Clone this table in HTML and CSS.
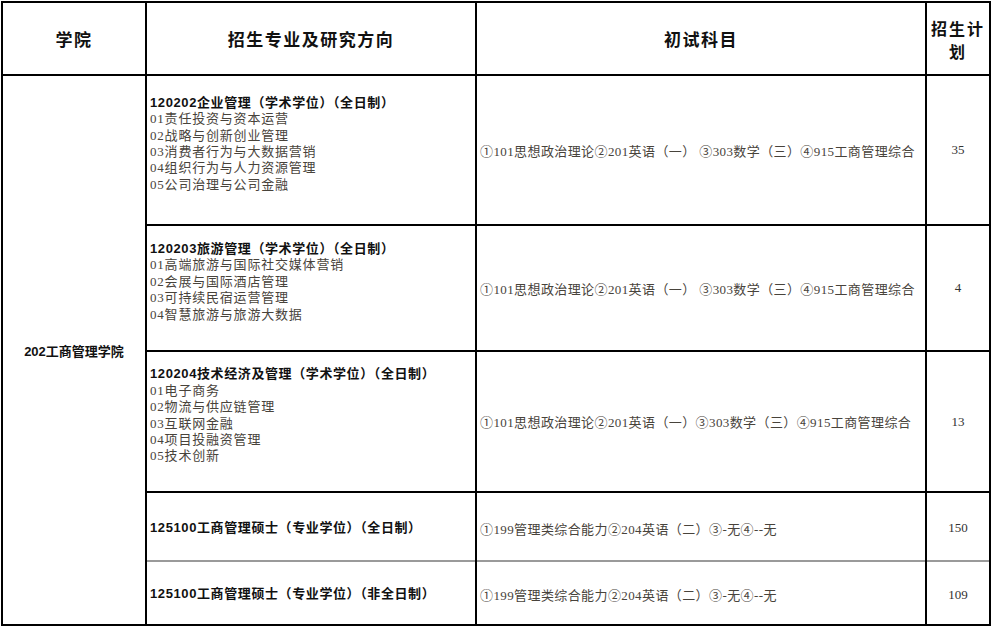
FILE: index.html
```html
<!DOCTYPE html>
<html lang="zh-CN">
<head>
<meta charset="utf-8">
<title>招生专业目录</title>
<link rel="stylesheet" href="styles.css">
</head>
<body>
<div class="sheet">
  <div class="cell head">学院</div>
  <div class="cell head">招生专业及研究方向</div>
  <div class="cell head">初试科目</div>
  <div class="cell head plan"><span>招生计</span><span>划</span></div>

  <div class="cell college">202工商管理学院</div>

  <div class="cell major padded">
    <div class="title">120202企业管理（学术学位）（全日制）</div>
    <div class="dir">01责任投资与资本运营</div>
    <div class="dir">02战略与创新创业管理</div>
    <div class="dir">03消费者行为与大数据营销</div>
    <div class="dir">04组织行为与人力资源管理</div>
    <div class="dir">05公司治理与公司金融</div>
  </div>
  <div class="cell exam">①101思想政治理论②201英语（一） ③303数学（三）④915工商管理综合</div>
  <div class="cell num">35</div>

  <div class="cell major padded">
    <div class="title">120203旅游管理（学术学位）（全日制）</div>
    <div class="dir">01高端旅游与国际社交媒体营销</div>
    <div class="dir">02会展与国际酒店管理</div>
    <div class="dir">03可持续民宿运营管理</div>
    <div class="dir">04智慧旅游与旅游大数据</div>
  </div>
  <div class="cell exam">①101思想政治理论②201英语（一） ③303数学（三）④915工商管理综合</div>
  <div class="cell num">4</div>

  <div class="cell major padded">
    <div class="title">120204技术经济及管理（学术学位）（全日制）</div>
    <div class="dir">01电子商务</div>
    <div class="dir">02物流与供应链管理</div>
    <div class="dir">03互联网金融</div>
    <div class="dir">04项目投融资管理</div>
    <div class="dir">05技术创新</div>
  </div>
  <div class="cell exam">①101思想政治理论②201英语（一）③303数学（三）④915工商管理综合</div>
  <div class="cell num">13</div>

  <div class="cell major low">
    <div class="title">125100工商管理硕士（专业学位）（全日制）</div>
  </div>
  <div class="cell exam low">①199管理类综合能力②204英语（二）③-无④--无</div>
  <div class="cell num low">150</div>

  <div class="cell major low last">
    <div class="title">125100工商管理硕士（专业学位）（非全日制）</div>
  </div>
  <div class="cell exam low last">①199管理类综合能力②204英语（二）③-无④--无</div>
  <div class="cell num low last">109</div>
</div>
</body>
</html>
```

FILE: styles.css
```css
html, body {
  margin: 0;
  padding: 0;
  background: #fff;
}

.sheet {
  margin: 1px 0 0 1px;
  width: 986px;
  padding: 2px;
  background: #000;
  display: grid;
  grid-template-columns: 142px 328px 448px 62px;
  grid-template-rows: 71px 148px 124px 139px 67px 62px;
  gap: 2px;
}

.cell {
  background: #fff;
  display: flex;
  align-items: center;
  box-sizing: border-box;
}

.head {
  justify-content: center;
  text-align: center;
  font-family: "Noto Sans CJK SC", "Liberation Sans", sans-serif;
  font-weight: 700;
  font-size: 17px;
  letter-spacing: 1.5px;
  color: #111;
}

.plan {
  flex-direction: column;
  justify-content: center;
  font-size: 16px;
  letter-spacing: 2px;
  line-height: 23px;
  padding-top: 3px;
}

.plan span {
  display: block;
  height: 23px;
}

.college {
  grid-row: 2 / span 5;
  justify-content: center;
  font-family: "Liberation Sans", "Noto Sans CJK SC", sans-serif;
  font-weight: 700;
  font-size: 13px;
  color: #111;
}

.major {
  flex-direction: column;
  align-items: flex-start;
  justify-content: center;
  padding-left: 3px;
  line-height: 16.4px;
}

.major.padded {
  padding-bottom: 12px;
}

.low {
  padding-top: 3px;
}

.title {
  font-family: "Liberation Sans", "Noto Sans CJK SC", sans-serif;
  font-weight: 700;
  font-size: 13px;
  letter-spacing: 0.6px;
  color: #111;
  white-space: nowrap;
}

.dir {
  font-family: "Liberation Serif", "Noto Sans CJK SC", serif;
  font-size: 13px;
  letter-spacing: 0.8px;
  color: #48433b;
  white-space: nowrap;
}

.exam {
  padding-left: 3px;
  font-family: "Liberation Serif", "Noto Sans CJK SC", serif;
  font-size: 13px;
  letter-spacing: 0.4px;
  color: #48433b;
  white-space: nowrap;
}

.num {
  justify-content: center;
  font-family: "Liberation Serif", serif;
  font-size: 13px;
  color: #333;
}

.last {
  margin-top: -2px;
  border-top: 2px solid #9a9a9a;
}
```
